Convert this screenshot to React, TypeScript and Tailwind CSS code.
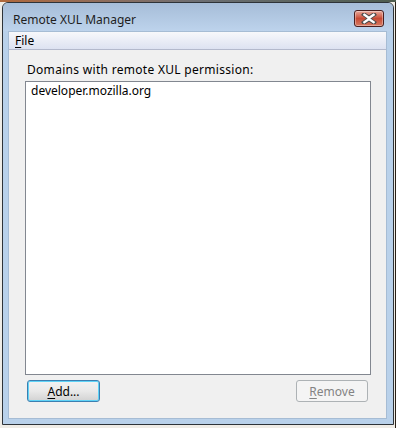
import React from "react";

function CloseButton() {
  return (
    <div className="flex h-[17px] w-[30px] items-center justify-center rounded-[3px] border border-[#4a1f1f] bg-gradient-to-b from-[#e9a99b] via-[#c74a35] to-[#d67a62] shadow-[inset_0_0_0_1px_rgba(255,255,255,0.35)]">
      <svg width="16" height="11" viewBox="0 0 16 11">
        <path
          d="M3 1.5 L8 4.8 L13 1.5 M3 9.5 L8 6.2 L13 9.5"
          stroke="#4b4b4b"
          strokeWidth="4.2"
          fill="none"
          strokeLinecap="square"
        />
        <path
          d="M3.4 1.8 L8 5 L12.6 1.8 M3.4 9.2 L8 6 L12.6 9.2"
          stroke="#ffffff"
          strokeWidth="2.4"
          fill="none"
          strokeLinecap="square"
        />
      </svg>
    </div>
  );
}

export default function App() {
  return (
    <div className="flex h-[428px] w-[396px] flex-col bg-[#efece6] font-['Noto_Sans',sans-serif] text-[12px] text-black">
      {/* desktop strip behind the window */}
      <div className="h-[2px] w-full bg-gradient-to-r from-[#b0683a] via-[#6d6f73] to-[#4e5c4e]" />
      <div className="flex flex-1">
        <div className="ml-[2px] flex h-[423px] w-[392px] flex-col rounded-t-[6px] border border-[#2e3338] bg-[#b9d1ea]">
          {/* ── Title bar ───────────────────────────────────────────── */}
          <div className="flex h-[28px] items-start rounded-t-[5px] bg-gradient-to-b from-[#a6bdd8] to-[#bdd3ec]">
            <span className="pl-[10px] pt-[9px] leading-[15px] text-[#1e1e1e]">Remote XUL Manager</span>
            <div className="ml-auto mr-[9px] mt-[7px]">
              <CloseButton />
            </div>
          </div>

          {/* ── Client area ─────────────────────────────────────────── */}
          <div className="mb-[5px] ml-[5px] mr-[6px] flex flex-1 flex-col border border-[#a6bcd4] bg-[#f0f0f0]">
            <div className="flex h-[18px] items-center border-b border-[#b3b9cc] bg-gradient-to-b from-[#f7f8fb] to-[#dde2f1] pl-[6px]">
              <span className="leading-[15px]">
                <span className="underline underline-offset-2">F</span>ile
              </span>
            </div>

            <div className="flex flex-1 flex-col pl-[16px] pr-[15px] pt-[12px]">
              <div className="mb-[4px] pl-[2px] leading-[15px] tracking-[0.3px]">Domains with remote XUL permission:</div>
              <div className="h-[294px] border border-[#828790] bg-white px-[5px] pt-[1px]">
                <div className="leading-[15px]">developer.mozilla.org</div>
              </div>

              <div className="mt-[5px] flex items-start justify-between px-[2px] pr-[3px]">
                <button className="flex h-[22px] w-[73px] items-center justify-center rounded-[3px] border border-[#3c7fb1] bg-gradient-to-b from-[#f2f2f2] via-[#e9e9e9] to-[#d2d2d2] shadow-[inset_0_0_0_1px_#5fd3f7] leading-[15px]">
                  <span>
                    <span className="underline underline-offset-2">A</span>dd...
                  </span>
                </button>
                <button className="flex h-[22px] w-[72px] items-center justify-center rounded-[3px] border border-[#adb2b5] bg-[#f4f4f4] leading-[15px] text-[#838383]">
                  <span>
                    <span className="underline underline-offset-2">R</span>emove
                  </span>
                </button>
              </div>
            </div>
          </div>
        </div>
        <div className="ml-[1px] flex-1 bg-[#2a2118]" />
      </div>
    </div>
  );
}
